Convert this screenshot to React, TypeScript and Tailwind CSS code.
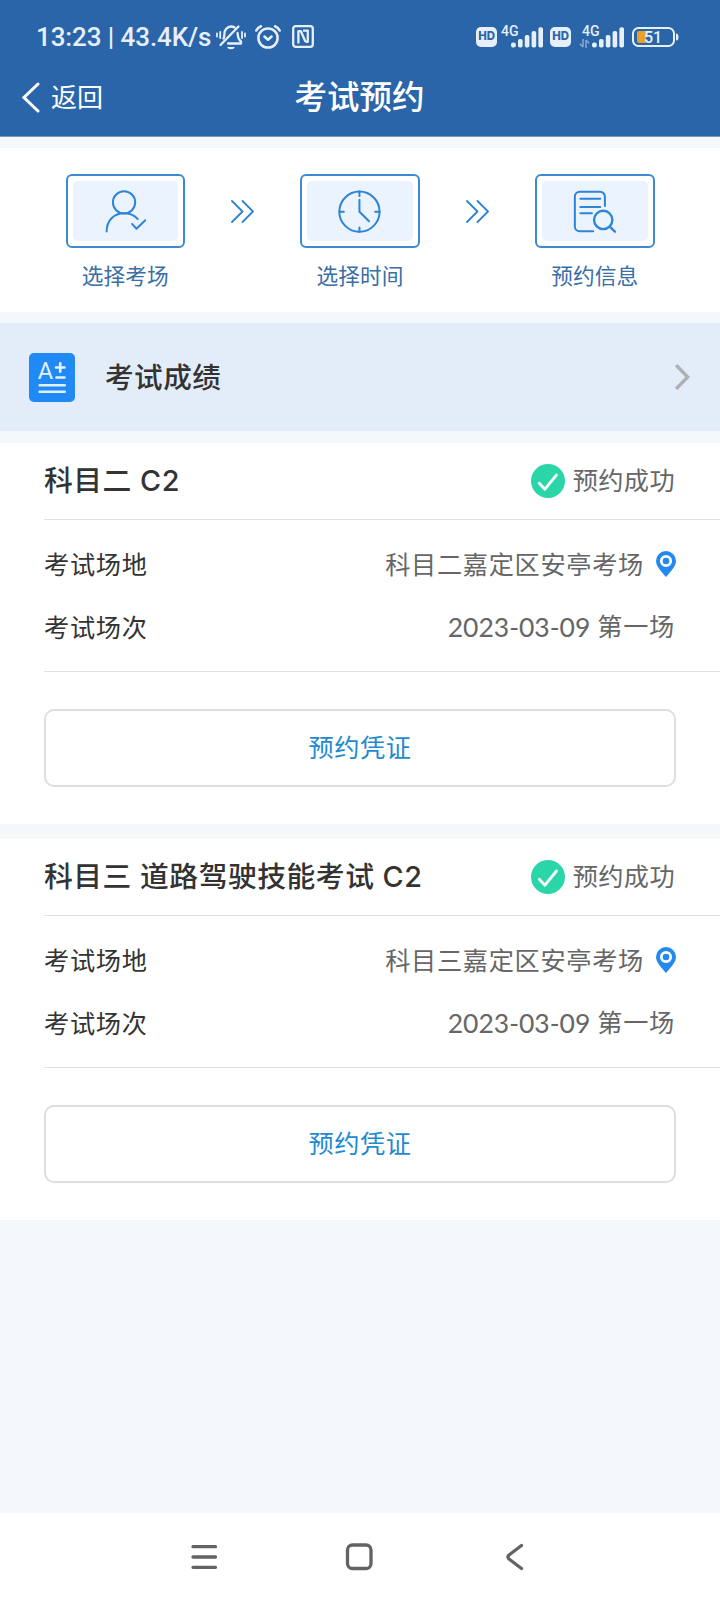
import type { ReactNode } from "react";

const exams = [
  {
    title: "科目二 C2",
    place: "科目二嘉定区安亭考场",
    date: "2023-03-09",
    session: "第一场",
  },
  {
    title: "科目三 道路驾驶技能考试 C2",
    place: "科目三嘉定区安亭考场",
    date: "2023-03-09",
    session: "第一场",
  },
];

function BellOffIcon() {
  return (
    <svg width="30" height="26" viewBox="0 0 30 26" fill="none" stroke="currentColor" strokeWidth="2.300" strokeLinecap="round" strokeLinejoin="round">
      <path d="M7.500 14.500c.7-1.400.9-2.500.9-4.500 0-4 2.800-7.500 6.600-7.500 1.500 0 2.600.4 3.600 1" />
      <path d="M21.600 9c.1 4.500.9 6.500 3.400 8.500v2H12" />
      <path d="M4.500 21 22.500 2.500" />
      <path d="M12 23.500h6c-1.500 1.400-4.500 1.400-6 0z" fill="currentColor" strokeWidth="1.200" />
      <path d="M1 9.500v3M4.200 8v6M26 8v6M29 9.500v3" strokeWidth="1.800" />
    </svg>
  );
}

function AlarmIcon() {
  return (
    <svg width="26" height="24" viewBox="0 0 26 24" fill="none" stroke="currentColor" strokeWidth="2.500" strokeLinecap="round">
      <circle cx="13" cy="13" r="9.600" />
      <path d="M1.300 5.500C2.200 3.500 4 2 6 1.300M24.700 5.500C23.800 3.500 22 2 20 1.300" />
      <path d="M9.400 11.500l3.600 3.200 3.600-3.200" strokeLinejoin="round" />
    </svg>
  );
}

function NfcIcon() {
  return (
    <svg width="22" height="23" viewBox="0 0 22 23" fill="none" stroke="currentColor" strokeWidth="2.300">
      <rect x="1.200" y="1.200" width="19.600" height="20.600" rx="2.500" />
      <path d="M6.400 18.500V6.200h2.500l4.600 10.600M11 5.700h4.800v11.100h-2.300" strokeLinejoin="round" />
    </svg>
  );
}

function SignalBars() {
  return (
    <svg width="32" height="21" viewBox="0 0 32 21" fill="currentColor">
      <rect x="0" y="15.500" width="4.800" height="5" rx="2" />
      <rect x="7" y="12" width="4.600" height="8.500" rx="1.800" />
      <rect x="13.800" y="8" width="4.600" height="12.500" rx="1.800" />
      <rect x="20.600" y="4" width="4.600" height="16.500" rx="1.800" />
      <rect x="27.400" y="0.300" width="4.600" height="20.200" rx="1.800" />
    </svg>
  );
}

function HdBadge() {
  return (
    <span className="mt-px flex h-[20px] w-[21px] items-center justify-center rounded-[5px] bg-[#e6effa] font-['Inter',sans-serif] text-[11.400px] leading-none font-extrabold tracking-[-0.200px] text-[#2b65a9]">
      HD
    </span>
  );
}

function StatusBar() {
  return (
    <div className="flex h-[73px] items-center pl-[36px] text-[#e6effa]">
      <span className="w-[180px] font-['Roboto',sans-serif] text-[26px] leading-none font-medium tracking-[-0.1px] whitespace-nowrap">
        13:23 | 43.4K/s
      </span>
      <BellOffIcon />
      <span className="ml-[9px]">
        <AlarmIcon />
      </span>
      <span className="ml-[11px]">
        <NfcIcon />
      </span>
      <span className="ml-[162px]">
        <HdBadge />
      </span>
      <span className="relative mt-px ml-[14px]">
        <SignalBars />
        <span className="absolute -top-[3px] -left-[10px] font-['Roboto',sans-serif] text-[14px] leading-none font-medium">4G</span>
      </span>
      <span className="ml-[7px]">
        <HdBadge />
      </span>
      <span className="relative mt-px ml-[21px]">
        <SignalBars />
        <span className="absolute -top-[3px] -left-[10px] font-['Roboto',sans-serif] text-[14px] leading-none font-medium">4G</span>
        <svg className="absolute top-[12px] -left-[13px] opacity-50" width="11" height="9" viewBox="0 0 11 9" fill="none" stroke="currentColor" strokeWidth="1.500">
          <path d="M4 0v8M4 8 .8 4.800M7 9V1M7 1l3.200 3.200" />
        </svg>
      </span>
      <svg className="ml-[8px]" width="47" height="20" viewBox="0 0 47 20">
        <rect x="1" y="1" width="41" height="18" rx="5.500" fill="none" stroke="currentColor" strokeWidth="2" />
        <path d="M7 4h7v12H7a2 2 0 0 1-2-2V6a2 2 0 0 1 2-2z" fill="#e6a02e" />
        <path d="M44 6.500a2.500 3.500 0 0 1 0 7z" fill="currentColor" />
        <text x="21" y="15.700" textAnchor="middle" fontFamily="Roboto, sans-serif" fontSize="16" fontWeight="500" fill="currentColor">
          51
        </text>
      </svg>
    </div>
  );
}

function UserCheckIcon() {
  return (
    <svg width="106" height="61" viewBox="0 0 106 61" fill="none" stroke="currentColor" strokeWidth="2" strokeLinecap="round" strokeLinejoin="round">
      <circle cx="51.300" cy="21.300" r="11.200" />
      <path d="M33.800 50.500c0-11 7.500-18.200 17.500-18.200 5.500 0 10 1.800 13.700 5.700" />
      <path d="M59.300 43l4.500 4.800 8.800-8.500" />
    </svg>
  );
}

function ClockIcon() {
  return (
    <svg width="106" height="61" viewBox="0 0 106 61" fill="none" stroke="currentColor" strokeWidth="2" strokeLinecap="round" strokeLinejoin="round">
      <circle cx="52.700" cy="30.700" r="20.200" />
      <path d="M52.700 10.500v4.500M52.700 46.500v4.400M32.500 30.700H37M68.500 30.700h4.400" />
      <path d="M52.700 18.700v12l9.600 9.600" />
    </svg>
  );
}

function DocSearchIcon() {
  return (
    <svg width="106" height="61" viewBox="0 0 106 61" fill="none" stroke="currentColor" strokeWidth="2" strokeLinecap="round" strokeLinejoin="round">
      <path d="M63.200 25V15.500a4.800 4.800 0 0 0-4.800-4.800H37.800a4.800 4.800 0 0 0-4.800 4.800v30a4.800 4.800 0 0 0 4.800 4.800h13.700" />
      <path d="M38.500 17.700h20M38.500 26h20M38.500 32.300h11.700" />
      <circle cx="61.500" cy="39" r="9.200" strokeWidth="2.400" />
      <path d="M68.300 46l5 4.800" strokeWidth="2.400" />
    </svg>
  );
}

function DoubleChevron() {
  return (
    <svg className="mt-[26px]" width="23" height="23" viewBox="0 0 23 23" fill="none" stroke="#2d84d2" strokeWidth="1.800" strokeLinecap="round" strokeLinejoin="round">
      <path d="M1 1l10.500 10.500L1 22M11.500 1l10.500 10.500L11.500 22" />
    </svg>
  );
}

function Step({ label, children }: { label: string; children: ReactNode }) {
  return (
    <div className="flex w-[119.500px] flex-col items-center">
      <div className="h-[74px] w-full rounded-[6px] border-2 border-[#3d8ad2] p-[5px]">
        <div className="flex h-full items-center justify-center rounded-[5px] bg-[#eaf3fe] text-[#2d84d8]">{children}</div>
      </div>
      <span className="mt-[12px] text-[21.700px] leading-[32px] whitespace-nowrap text-[#3a6ea5]">{label}</span>
    </div>
  );
}

function ScoreIcon() {
  return (
    <svg width="46" height="49" viewBox="0 0 46 49" fill="none" stroke="#e2f0ff" strokeWidth="2.600" strokeLinecap="round">
      <rect width="46" height="49" rx="5" fill="#2189f3" stroke="none" />
      <text x="16.400" y="25.700" textAnchor="middle" fontFamily="Roboto, sans-serif" fontSize="23.500" fill="#e2f0ff" stroke="none">
        A
      </text>
      <path d="M27 14.500h8.500M31.200 10.300v8.500M27.500 24.500h8M10.700 32.200h25M10.700 38.700h25" />
    </svg>
  );
}

function CheckBadge() {
  return (
    <svg width="34" height="34" viewBox="0 0 34 34" fill="none">
      <circle cx="17" cy="17" r="17" fill="#2ad6a8" />
      <path d="M8.300 19.300l5.600 5.900L25.500 11" stroke="#fff" strokeWidth="2.800" strokeLinecap="round" strokeLinejoin="round" />
    </svg>
  );
}

function PinIcon() {
  return (
    <svg className="-mt-[2px]" width="20" height="26" viewBox="0 0 20 26">
      <path d="M10 0a10 10 0 0 1 10 10c0 5-4.500 9.500-10 16C4.500 19.500 0 15 0 10A10 10 0 0 1 10 0z" fill="#2489ee" />
      <circle cx="10" cy="10" r="4.700" fill="#2489ee" stroke="#fff" strokeWidth="2.800" />
    </svg>
  );
}

function ExamCard({ exam }: { exam: (typeof exams)[number] }) {
  return (
    <section className="h-[381px] bg-white pl-[44px]">
      <div className="flex h-[77px] items-center justify-between border-b border-[#e2e2e2] pr-[45px]">
        <h2 className="font-['Inter','Noto_Sans_CJK_SC',sans-serif] text-[28.800px] font-medium tracking-[0.500px] whitespace-nowrap text-[#333]">
          {exam.title}
        </h2>
        <div className="flex items-center gap-[8px]">
          <CheckBadge />
          <span className="text-[25.200px] tracking-[0.400px] whitespace-nowrap text-[#666]">预约成功</span>
        </div>
      </div>

      <div className="flex h-[152px] flex-col border-b border-[#e2e2e2] pt-[14px] pr-[44px] text-[25.200px] tracking-[0.700px] text-[#666]">
        <div className="flex h-[62px] items-center justify-between">
          <span className="text-[#333]">考试场地</span>
          <span className="flex items-center gap-[12px] whitespace-nowrap">
            {exam.place}
            <PinIcon />
          </span>
        </div>
        <div className="flex h-[62px] items-center justify-between pt-px">
          <span className="text-[#333]">考试场次</span>
          <span className="flex gap-[7px] pr-px whitespace-nowrap">
            <span className="text-[26.500px] tracking-normal">{exam.date}</span>
            {exam.session}
          </span>
        </div>
      </div>

      <div className="pt-[37px] pr-[44px]">
        <button className="h-[78px] w-full rounded-[10px] border-2 border-[#dedede] text-[25.200px] tracking-[0.600px] text-[#1f8ad0]">预约凭证</button>
      </div>
    </section>
  );
}

export default function App() {
  return (
    <main
      className="flex h-[1600px] w-[720px] flex-col overflow-hidden bg-[#f4f8fa] font-['Lato','Noto_Sans_CJK_SC',sans-serif]"
      lang="zh-CN"
    >
      {/* Header */}
      <header className="h-[137px] shrink-0 border-b border-[#7d98b5] bg-[#2b65a9]">
        <StatusBar />
        <div className="grid h-[46px] grid-cols-3 items-center text-white">
          <button className="flex items-center gap-[11px] pl-[22px] text-[26px]">
            <svg width="18" height="31" viewBox="0 0 18 31" fill="none" stroke="currentColor" strokeWidth="3" strokeLinecap="round">
              <path d="M16 2 2 15.500 16 29" />
            </svg>
            返回
          </button>
          <h1 className="pr-px text-center text-[32.500px] font-medium whitespace-nowrap">考试预约</h1>
        </div>
      </header>

      {/* Booking steps */}
      <section className="mt-[11px] flex h-[164px] shrink-0 justify-between bg-white px-[65.500px] pt-[26px]">
        <Step label="选择考场">
          <UserCheckIcon />
        </Step>
        <DoubleChevron />
        <Step label="选择时间">
          <ClockIcon />
        </Step>
        <DoubleChevron />
        <Step label="预约信息">
          <DocSearchIcon />
        </Step>
      </section>

      {/* Score entry */}
      <section className="mt-[11px] flex h-[108px] shrink-0 items-center bg-[#e3edf9] pr-[30px] pl-[29px]">
        <ScoreIcon />
        <span className="ml-[30px] flex-1 text-[28.600px] font-medium tracking-[0.500px] text-[#333]">考试成绩</span>
        <svg width="15" height="26" viewBox="0 0 15 26" fill="none" stroke="#aeb0b3" strokeWidth="3.400">
          <path d="M1.200 1.200l11.500 11.800L1.200 24.800" />
        </svg>
      </section>

      <div className="mt-[12px] flex flex-1 flex-col gap-[15px]">
        {exams.map((exam) => (
          <ExamCard key={exam.title} exam={exam} />
        ))}
      </div>

      {/* System navigation */}
      <nav className="flex h-[87px] shrink-0 items-center bg-white pl-[191px]">
        <svg width="334" height="30" viewBox="0 0 334 30" fill="none" stroke="#636363" strokeWidth="3.300" strokeLinecap="round" strokeLinejoin="round">
          <path d="M2 4.700h22.500M2 15h22.500M2 25.300h22.500" />
          <rect x="156.500" y="3" width="23.500" height="23.500" rx="5" />
          <path d="M330.500 3.500 318 13q-2 2 0 4l12.500 9.500" />
        </svg>
      </nav>
    </main>
  );
}
